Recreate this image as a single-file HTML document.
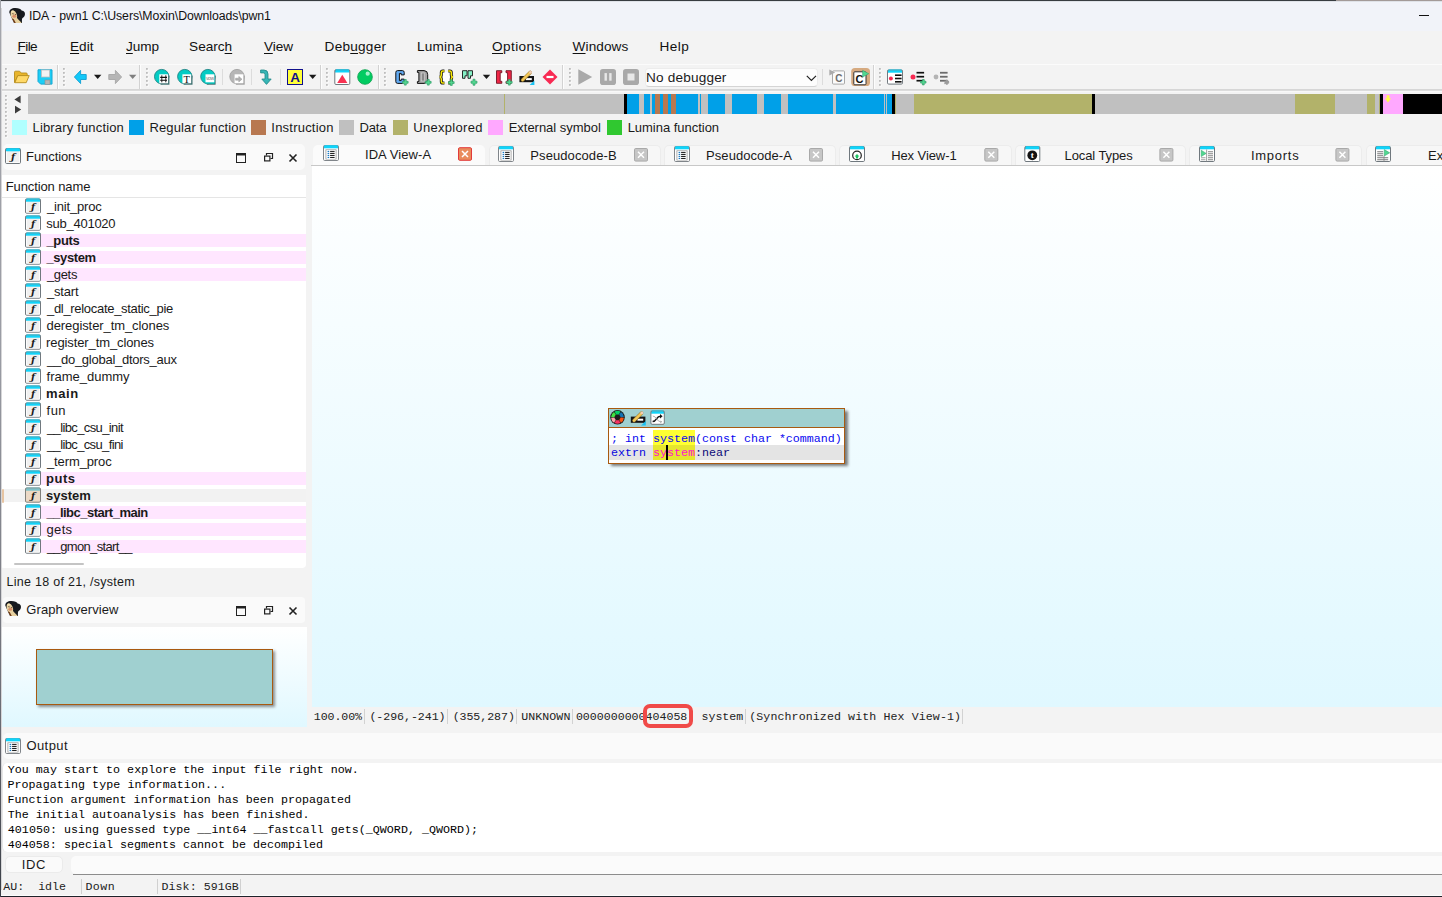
<!DOCTYPE html><html><head><meta charset="utf-8"><title>IDA - pwn1</title><style>
*{box-sizing:border-box;margin:0;padding:0}
html,body{width:1442px;height:897px;overflow:hidden;background:#f3f3f3}
body{position:relative;font-family:"Liberation Sans",sans-serif;font-size:12px;color:#1a1a1a}
.a{position:absolute}
.t{position:absolute;white-space:pre;line-height:16px;height:16px}
.ui{font-family:"Liberation Sans",sans-serif;font-size:12px}
.mono{font-family:"Liberation Mono",monospace}
u{text-decoration:underline;text-underline-offset:1.5px;text-decoration-thickness:1px}
svg{position:absolute;overflow:visible}
</style></head><body>
<div class="a" style="left:0px;top:0px;width:1336px;height:1px;background:#383c40;"></div>
<div class="a" style="left:1336px;top:0px;width:106px;height:1px;background:#a39a98;"></div>
<div class="a" style="left:1px;top:1px;width:1441px;height:1px;background:#dfe2e8;"></div>
<div class="a" style="left:1px;top:2px;width:1441px;height:29px;background:#f1f3f9;"></div>
<div class="a" style="left:1px;top:31px;width:1441px;height:33px;background:#f3f3f3;"></div>
<div id="t1" class="t" style="left:28.89px;top:8px;font-size:12.3px;color:#111;letter-spacing:-0.067px;">IDA - pwn1 C:\Users\Moxin\Downloads\pwn1</div>
<div class="a" style="left:1419px;top:15px;width:10px;height:1px;background:#111;"></div>
<div id="t2" class="t" style="left:17.62px;top:36.5px;font-size:13.6px;line-height:20px;height:20px;color:#111;letter-spacing:-0.646px;"><u>F</u>ile</div>
<div id="t3" class="t" style="left:70.0px;top:36.5px;font-size:13.6px;line-height:20px;height:20px;color:#111;letter-spacing:0.019px;"><u>E</u>dit</div>
<div id="t4" class="t" style="left:126.0px;top:36.5px;font-size:13.6px;line-height:20px;height:20px;color:#111;letter-spacing:-0.046px;"><u>J</u>ump</div>
<div id="t5" class="t" style="left:189.1px;top:36.5px;font-size:13.6px;line-height:20px;height:20px;color:#111;letter-spacing:0.000px;">Searc<u>h</u></div>
<div id="t6" class="t" style="left:264.0px;top:36.5px;font-size:13.6px;line-height:20px;height:20px;color:#111;letter-spacing:-0.059px;"><u>V</u>iew</div>
<div id="t7" class="t" style="left:324.61px;top:36.5px;font-size:13.6px;line-height:20px;height:20px;color:#111;letter-spacing:0.230px;">Deb<u>u</u>gger</div>
<div id="t8" class="t" style="left:417.1px;top:36.5px;font-size:13.6px;line-height:20px;height:20px;color:#111;letter-spacing:0.156px;">Lumi<u>n</u>a</div>
<div id="t9" class="t" style="left:492.0px;top:36.5px;font-size:13.6px;line-height:20px;height:20px;color:#111;letter-spacing:0.407px;"><u>O</u>ptions</div>
<div id="t10" class="t" style="left:572.62px;top:36.5px;font-size:13.6px;line-height:20px;height:20px;color:#111;letter-spacing:0.089px;"><u>W</u>indows</div>
<div id="t11" class="t" style="left:659.61px;top:36.5px;font-size:13.6px;line-height:20px;height:20px;color:#111;letter-spacing:0.380px;">Help</div>
<div class="a" style="left:1px;top:64px;width:1441px;height:1px;background:#fbfbfb;"></div>
<div class="a" style="left:1px;top:89px;width:1441px;height:1px;background:#d6d6d6;"></div>
<div class="a" style="left:1px;top:90px;width:1441px;height:1px;background:#dcdcdc;"></div>
<div class="a" style="left:1px;top:91px;width:1441px;height:1px;background:#f8f8f8;"></div>
<div class="a" style="left:645px;top:68px;width:173px;height:19px;background:#fdfdfd;border:1px solid #ececec;border-bottom-color:#d4d4d4;border-radius:4px"></div>
<div id="t12" class="t" style="left:646.1px;top:69.5px;font-size:13.6px;letter-spacing:0.169px;">No debugger</div>
<div class="a" style="left:28px;top:94px;width:476px;height:20px;background:#c0c0c0;"></div>
<div class="a" style="left:504px;top:94px;width:1px;height:20px;background:#b2b26a;"></div>
<div class="a" style="left:505px;top:94px;width:119px;height:20px;background:#c0c0c0;"></div>
<div class="a" style="left:624px;top:94px;width:3px;height:20px;background:#000;"></div>
<div class="a" style="left:627px;top:94px;width:12px;height:20px;background:#00a0e8;"></div>
<div class="a" style="left:639px;top:94px;width:5px;height:20px;background:#c0c0c0;"></div>
<div class="a" style="left:644px;top:94px;width:6px;height:20px;background:#00a0e8;"></div>
<div class="a" style="left:650px;top:94px;width:2px;height:20px;background:#c0c0c0;"></div>
<div class="a" style="left:652px;top:94px;width:3px;height:20px;background:#00a0e8;"></div>
<div class="a" style="left:655px;top:94px;width:5px;height:20px;background:#b87850;"></div>
<div class="a" style="left:660px;top:94px;width:3px;height:20px;background:#00a0e8;"></div>
<div class="a" style="left:663px;top:94px;width:5px;height:20px;background:#b87850;"></div>
<div class="a" style="left:668px;top:94px;width:3px;height:20px;background:#00a0e8;"></div>
<div class="a" style="left:671px;top:94px;width:5px;height:20px;background:#b87850;"></div>
<div class="a" style="left:676px;top:94px;width:22px;height:20px;background:#00a0e8;"></div>
<div class="a" style="left:698px;top:94px;width:2px;height:20px;background:#c0c0c0;"></div>
<div class="a" style="left:700px;top:94px;width:1px;height:20px;background:#00a0e8;"></div>
<div class="a" style="left:701px;top:94px;width:7px;height:20px;background:#c0c0c0;"></div>
<div class="a" style="left:708px;top:94px;width:17px;height:20px;background:#00a0e8;"></div>
<div class="a" style="left:725px;top:94px;width:7px;height:20px;background:#c0c0c0;"></div>
<div class="a" style="left:732px;top:94px;width:25px;height:20px;background:#00a0e8;"></div>
<div class="a" style="left:757px;top:94px;width:7px;height:20px;background:#c0c0c0;"></div>
<div class="a" style="left:764px;top:94px;width:17px;height:20px;background:#00a0e8;"></div>
<div class="a" style="left:781px;top:94px;width:7px;height:20px;background:#c0c0c0;"></div>
<div class="a" style="left:788px;top:94px;width:45px;height:20px;background:#00a0e8;"></div>
<div class="a" style="left:833px;top:94px;width:3px;height:20px;background:#c0c0c0;"></div>
<div class="a" style="left:836px;top:94px;width:48px;height:20px;background:#00a0e8;"></div>
<div class="a" style="left:884px;top:94px;width:1px;height:20px;background:#c0c0c0;"></div>
<div class="a" style="left:885px;top:94px;width:1px;height:20px;background:#00a0e8;"></div>
<div class="a" style="left:886px;top:94px;width:1px;height:20px;background:#c0c0c0;"></div>
<div class="a" style="left:887px;top:94px;width:5px;height:20px;background:#00a0e8;"></div>
<div class="a" style="left:892px;top:94px;width:3px;height:20px;background:#000;"></div>
<div class="a" style="left:895px;top:94px;width:1px;height:20px;background:#b2b26a;"></div>
<div class="a" style="left:896px;top:94px;width:18px;height:20px;background:#c0c0c0;"></div>
<div class="a" style="left:914px;top:94px;width:178px;height:20px;background:#b2b26a;"></div>
<div class="a" style="left:1092px;top:94px;width:3px;height:20px;background:#000;"></div>
<div class="a" style="left:1095px;top:94px;width:200px;height:20px;background:#c0c0c0;"></div>
<div class="a" style="left:1295px;top:94px;width:40px;height:20px;background:#b2b26a;"></div>
<div class="a" style="left:1335px;top:94px;width:32px;height:20px;background:#c0c0c0;"></div>
<div class="a" style="left:1367px;top:94px;width:8px;height:20px;background:#b2b26a;"></div>
<div class="a" style="left:1375px;top:94px;width:4px;height:20px;background:#c0c0c0;"></div>
<div class="a" style="left:1379px;top:94px;width:1px;height:20px;background:#b2b26a;"></div>
<div class="a" style="left:1380px;top:94px;width:3px;height:20px;background:#000;"></div>
<div class="a" style="left:1383px;top:94px;width:20px;height:20px;background:#ffa8ff;"></div>
<div class="a" style="left:1403px;top:94px;width:39px;height:20px;background:#000;"></div>
<div class="a" style="left:12px;top:120px;width:15px;height:15px;background:#b0ffff;"></div>
<div id="t13" class="t" style="left:32.49px;top:120px;font-size:13px;letter-spacing:0.165px;">Library function</div>
<div class="a" style="left:129px;top:120px;width:15px;height:15px;background:#00a0e8;"></div>
<div id="t14" class="t" style="left:149.49px;top:120px;font-size:13px;letter-spacing:0.116px;">Regular function</div>
<div class="a" style="left:251px;top:120px;width:15px;height:15px;background:#b87850;"></div>
<div id="t15" class="t" style="left:271.31px;top:120px;font-size:13px;letter-spacing:0.222px;">Instruction</div>
<div class="a" style="left:339px;top:120px;width:15px;height:15px;background:#c0c0c0;"></div>
<div id="t16" class="t" style="left:359.49px;top:120px;font-size:13px;letter-spacing:-0.160px;">Data</div>
<div class="a" style="left:393px;top:120px;width:15px;height:15px;background:#b2b26a;"></div>
<div id="t17" class="t" style="left:413.37px;top:120px;font-size:13px;letter-spacing:0.282px;">Unexplored</div>
<div class="a" style="left:488px;top:120px;width:15px;height:15px;background:#ffa8ff;"></div>
<div id="t18" class="t" style="left:508.66px;top:120px;font-size:13px;letter-spacing:-0.020px;">External symbol</div>
<div class="a" style="left:607px;top:120px;width:15px;height:15px;background:#30c830;"></div>
<div id="t19" class="t" style="left:627.66px;top:120px;font-size:13px;letter-spacing:-0.026px;">Lumina function</div>
<div class="a" style="left:3px;top:144px;width:302px;height:26px;background:#fafafa;border-radius:5px"></div>
<div id="t20" class="t" style="left:26.1px;top:149px;font-size:13px;letter-spacing:-0.090px;">Functions</div>
<div class="a" style="left:0px;top:175px;width:306px;height:393px;background:#fff;border-radius:0 0 4px 4px"></div>
<div id="t21" class="t" style="left:5.67px;top:179px;font-size:13px;letter-spacing:-0.100px;">Function name</div>
<div class="a" style="left:0px;top:197px;width:306px;height:1px;background:#e5e5e5;"></div>
<div id="t22" class="t" style="left:47.0px;top:199px;font-size:13px;;letter-spacing:-0.181px;">_init_proc</div>
<div id="t23" class="t" style="left:46.36px;top:216px;font-size:13px;;letter-spacing:-0.263px;">sub_401020</div>
<div class="a" style="left:41px;top:234px;width:265px;height:13px;background:#ffe6ff;"></div>
<div id="t24" class="t" style="left:46.44px;top:233px;font-size:13px;font-weight:bold;;letter-spacing:-0.332px;">_puts</div>
<div class="a" style="left:41px;top:251px;width:265px;height:13px;background:#ffe6ff;"></div>
<div id="t25" class="t" style="left:46.44px;top:250px;font-size:13px;font-weight:bold;;letter-spacing:-0.406px;">_system</div>
<div class="a" style="left:41px;top:268px;width:265px;height:13px;background:#ffe6ff;"></div>
<div id="t26" class="t" style="left:46.99px;top:267px;font-size:13px;;letter-spacing:-0.351px;">_gets</div>
<div id="t27" class="t" style="left:47.0px;top:284px;font-size:13px;;letter-spacing:-0.203px;">_start</div>
<div id="t28" class="t" style="left:47.0px;top:301px;font-size:13px;;letter-spacing:-0.308px;">_dl_relocate_static_pie</div>
<div id="t29" class="t" style="left:46.56px;top:318px;font-size:13px;;letter-spacing:-0.082px;">deregister_tm_clones</div>
<div id="t30" class="t" style="left:46.1px;top:335px;font-size:13px;;letter-spacing:-0.108px;">register_tm_clones</div>
<div id="t31" class="t" style="left:47.0px;top:352px;font-size:13px;;letter-spacing:-0.257px;">__do_global_dtors_aux</div>
<div id="t32" class="t" style="left:46.56px;top:369px;font-size:13px;;letter-spacing:-0.008px;">frame_dummy</div>
<div id="t33" class="t" style="left:46.1px;top:386px;font-size:13px;font-weight:bold;;letter-spacing:0.587px;">main</div>
<div id="t34" class="t" style="left:46.58px;top:403px;font-size:13px;;letter-spacing:0.469px;">fun</div>
<div id="t35" class="t" style="left:47.0px;top:420px;font-size:13px;;letter-spacing:-0.621px;">__libc_csu_init</div>
<div id="t36" class="t" style="left:47.0px;top:437px;font-size:13px;;letter-spacing:-0.635px;">__libc_csu_fini</div>
<div id="t37" class="t" style="left:47.0px;top:454px;font-size:13px;;letter-spacing:-0.117px;">_term_proc</div>
<div class="a" style="left:41px;top:472px;width:265px;height:13px;background:#ffe6ff;"></div>
<div id="t38" class="t" style="left:46.1px;top:471px;font-size:13px;font-weight:bold;;letter-spacing:0.483px;">puts</div>
<div class="a" style="left:4px;top:489.3px;width:302px;height:12.5px;background:#f2f2f2;"></div>
<div class="a" style="left:2px;top:488.5px;width:1.8px;height:14px;background:#e6c4a2;border-radius:1px"></div>
<div id="t39" class="t" style="left:46.1px;top:488px;font-size:13px;font-weight:bold;;letter-spacing:-0.029px;">system</div>
<div class="a" style="left:41px;top:506px;width:265px;height:13px;background:#ffe6ff;"></div>
<div id="t40" class="t" style="left:46.44px;top:505px;font-size:13px;font-weight:bold;;letter-spacing:-0.501px;">__libc_start_main</div>
<div class="a" style="left:41px;top:523px;width:265px;height:13px;background:#ffe6ff;"></div>
<div id="t41" class="t" style="left:46.55px;top:522px;font-size:13px;;letter-spacing:0.331px;">gets</div>
<div class="a" style="left:41px;top:540px;width:265px;height:13px;background:#ffe6ff;"></div>
<div id="t42" class="t" style="left:46.99px;top:539px;font-size:13px;;letter-spacing:-0.650px;">__gmon_start__</div>
<div class="a" style="left:14px;top:563px;width:70px;height:2px;background:#c4c4c4;border-radius:1px"></div>
<div id="t43" class="t" style="left:6.56px;top:574px;font-size:12.5px;letter-spacing:0.279px;">Line 18 of 21, /system</div>
<div class="a" style="left:3px;top:597px;width:302px;height:26px;background:#fafafa;border-radius:4px"></div>
<div id="t44" class="t" style="left:26.35px;top:602px;font-size:13px;letter-spacing:0.082px;">Graph overview</div>
<div class="a" style="left:2px;top:627px;width:305px;height:100px;background:linear-gradient(#ffffff,#e0f8ff);"></div>
<div class="a" style="left:38px;top:651px;width:237px;height:56px;background:#606060;filter:blur(1.5px);opacity:.7"></div>
<div class="a" style="left:36px;top:649px;width:237px;height:56px;background:#a0d0d0;border:1px solid #a85a10"></div>
<svg style="left:236px;top:153px" width="10" height="10" viewBox="0 0 10 10"><rect x="0.5" y="0.5" width="9" height="9" fill="none" stroke="#222"/><rect x="0" y="0" width="10" height="2.5" fill="#222"/></svg>
<svg style="left:264px;top:153px" width="9" height="9" viewBox="0 0 9 9"><path d="M2.5 2.5V0.5H8.5V5.5H6.5" fill="none" stroke="#222" stroke-width="1.2"/><rect x="0.6" y="3.1" width="5.3" height="4.8" fill="none" stroke="#222" stroke-width="1.2"/></svg>
<svg style="left:289px;top:154px" width="8" height="8" viewBox="0 0 8 8"><path d="M0.5 0.5L7.5 7.5M7.5 0.5L0.5 7.5" stroke="#222" stroke-width="1.6"/></svg>
<svg style="left:236px;top:606px" width="10" height="10" viewBox="0 0 10 10"><rect x="0.5" y="0.5" width="9" height="9" fill="none" stroke="#222"/><rect x="0" y="0" width="10" height="2.5" fill="#222"/></svg>
<svg style="left:264px;top:606px" width="9" height="9" viewBox="0 0 9 9"><path d="M2.5 2.5V0.5H8.5V5.5H6.5" fill="none" stroke="#222" stroke-width="1.2"/><rect x="0.6" y="3.1" width="5.3" height="4.8" fill="none" stroke="#222" stroke-width="1.2"/></svg>
<svg style="left:289px;top:607px" width="8" height="8" viewBox="0 0 8 8"><path d="M0.5 0.5L7.5 7.5M7.5 0.5L0.5 7.5" stroke="#222" stroke-width="1.6"/></svg>
<div class="a" style="left:311px;top:165px;width:1131px;height:1px;background:#c8c8c8;"></div>
<div class="a" style="left:312px;top:166px;width:1130px;height:541px;background:linear-gradient(#ffffff,#e0f8ff);"></div>
<div class="a" style="left:313.4px;top:144.7px;width:171.6px;height:20.3px;background:#fbfbfb;border-radius:5px 5px 0 0;"></div>
<div id="t45" class="t" style="left:364.97px;top:146.5px;font-size:13px;letter-spacing:0.068px;">IDA View-A</div>
<div class="a" style="left:488.6px;top:144.7px;width:172.8px;height:20.3px;background:#f7f7f7;border-radius:5px 5px 0 0;border:1px solid #ececec;border-bottom:none"></div>
<div id="t46" class="t" style="left:530.33px;top:147.7px;font-size:13px;letter-spacing:0.087px;">Pseudocode-B</div>
<div class="a" style="left:664.2px;top:144.7px;width:172px;height:20.3px;background:#f7f7f7;border-radius:5px 5px 0 0;border:1px solid #ececec;border-bottom:none"></div>
<div id="t47" class="t" style="left:706.1px;top:147.7px;font-size:13px;letter-spacing:0.046px;">Pseudocode-A</div>
<div class="a" style="left:839.3px;top:144.7px;width:172.3px;height:20.3px;background:#f7f7f7;border-radius:5px 5px 0 0;border:1px solid #ececec;border-bottom:none"></div>
<div id="t48" class="t" style="left:891.15px;top:147.7px;font-size:13px;letter-spacing:-0.084px;">Hex View-1</div>
<div class="a" style="left:1015.2px;top:144.7px;width:170.5px;height:20.3px;background:#f7f7f7;border-radius:5px 5px 0 0;border:1px solid #ececec;border-bottom:none"></div>
<div id="t49" class="t" style="left:1064.5px;top:147.7px;font-size:13px;letter-spacing:-0.091px;">Local Types</div>
<div class="a" style="left:1189.2px;top:144.7px;width:173.1px;height:20.3px;background:#f7f7f7;border-radius:5px 5px 0 0;border:1px solid #ececec;border-bottom:none"></div>
<div id="t50" class="t" style="left:1250.98px;top:147.7px;font-size:13px;letter-spacing:0.731px;">Imports</div>
<div class="a" style="left:1365.5px;top:144.7px;width:80px;height:20.3px;background:#f7f7f7;border-radius:5px 5px 0 0;border:1px solid #ececec;border-bottom:none"></div>
<div id="t51" class="t" style="left:1428px;top:147.7px;font-size:13px;">Ex</div>
<div class="a" style="left:312px;top:707px;width:1130px;height:20px;background:#f3f3f3;"></div>
<div id="t52" class="t mono" style="left:313.84px;top:708.8px;font-size:11.6px;color:#222;letter-spacing:-0.088px;">100.00%</div>
<div id="t53" class="t mono" style="left:369.45px;top:708.8px;font-size:11.6px;color:#222;letter-spacing:-0.045px;">(-296,-241)</div>
<div id="t54" class="t mono" style="left:452.63px;top:708.8px;font-size:11.6px;color:#222;letter-spacing:-0.045px;">(355,287)</div>
<div id="t55" class="t mono" style="left:521.17px;top:708.8px;font-size:11.6px;color:#222;letter-spacing:0.084px;">UNKNOWN</div>
<div id="t56" class="t mono" style="left:575.9px;top:708.8px;font-size:11.6px;color:#222;letter-spacing:0.007px;">0000000000404058</div>
<div id="t57" class="t mono" style="left:701.5px;top:708.8px;font-size:11.6px;color:#222;letter-spacing:-0.016px;">system</div>
<div id="t58" class="t mono" style="left:749.26px;top:708.8px;font-size:11.6px;color:#222;letter-spacing:0.103px;">(Synchronized with Hex View-1)</div>
<div class="a" style="left:364.2px;top:709px;width:1px;height:14.5px;background:#d2d2d2;"></div>
<div class="a" style="left:447.2px;top:709px;width:1px;height:14.5px;background:#d2d2d2;"></div>
<div class="a" style="left:516.3px;top:709px;width:1px;height:14.5px;background:#d2d2d2;"></div>
<div class="a" style="left:572.3px;top:709px;width:1px;height:14.5px;background:#d2d2d2;"></div>
<div class="a" style="left:745.1px;top:709px;width:1px;height:14.5px;background:#d2d2d2;"></div>
<div class="a" style="left:962.1px;top:709px;width:1px;height:14.5px;background:#d2d2d2;"></div>
<div class="a" style="left:643px;top:703.8px;width:50px;height:24.2px;background:transparent;border:4px solid #f04a48;border-radius:7px"></div>
<div class="a" style="left:611px;top:411px;width:237px;height:55px;background:#505050;filter:blur(1.5px);opacity:.75"></div>
<div class="a" style="left:608px;top:408px;width:237px;height:56px;background:#fff;border:1px solid #a85a10"></div>
<div class="a" style="left:609px;top:409px;width:235px;height:18px;background:#a0d0d0;"></div>
<div class="a" style="left:609px;top:427px;width:235px;height:1px;background:#a85a10;"></div>
<div class="a" style="left:609px;top:445px;width:235px;height:15px;background:#e4e4e4;"></div>
<div class="a" style="left:653px;top:430px;width:42px;height:15px;background:#ffff32;"></div>
<div class="a" style="left:653px;top:445px;width:42px;height:15px;background:#e6e62e;"></div>
<div id="t59" class="t mono" style="left:611px;top:430.5px;font-size:11.67px;color:#0808f0;">; int system(const char *command)</div>
<div id="t60" class="t mono" style="left:611px;top:445.4px;font-size:11.67px;"><span style="color:#0808e0">extrn </span><span style="color:#ff10d0">system</span><span style="color:#0a0a78">:near</span></div>
<div class="a" style="left:666px;top:445px;width:2.2px;height:15px;background:#000;"></div>
<div class="a" style="left:3px;top:733px;width:1442px;height:26px;background:#fafafa;border-radius:5px 0 0 5px"></div>
<div id="t61" class="t" style="left:26.41px;top:738px;font-size:13px;letter-spacing:0.430px;">Output</div>
<div class="a" style="left:2px;top:763px;width:1442px;height:89px;background:#fff;border-radius:5px 0 0 5px;border-left:1px solid #e6e6e6"></div>
<div id="t62" class="t mono" style="left:7.75px;top:761.6px;font-size:11.67px;color:#000;letter-spacing:0.027px;">You may start to explore the input file right now.</div>
<div id="t63" class="t mono" style="left:7.38px;top:776.6px;font-size:11.67px;color:#000;letter-spacing:0.064px;">Propagating type information...</div>
<div id="t64" class="t mono" style="left:7.39px;top:791.6px;font-size:11.67px;color:#000;letter-spacing:0.019px;">Function argument information has been propagated</div>
<div id="t65" class="t mono" style="left:7.72px;top:806.6px;font-size:11.67px;color:#000;letter-spacing:0.023px;">The initial autoanalysis has been finished.</div>
<div id="t66" class="t mono" style="left:7.83px;top:821.6px;font-size:11.67px;color:#000;letter-spacing:0.024px;">401050: using guessed type __int64 __fastcall gets(_QWORD, _QWORD);</div>
<div id="t67" class="t mono" style="left:7.83px;top:836.6px;font-size:11.67px;color:#000;letter-spacing:0.011px;">404058: special segments cannot be decompiled</div>
<div class="a" style="left:5px;top:855.7px;width:58px;height:17.8px;background:#fafafa;border:1px solid #ebebeb;border-radius:5px"></div>
<div id="t68" class="t" style="left:21.85px;top:857px;font-size:13px;letter-spacing:0.522px;">IDC</div>
<div class="a" style="left:71px;top:856px;width:1371px;height:18px;background:#fbfbfb;border-radius:5px 0 0 5px"></div>
<div class="a" style="left:73px;top:873.5px;width:1369px;height:1px;background:#8c8c8c;"></div>
<div class="a" style="left:0px;top:875px;width:1442px;height:20px;background:#f3f3f3;"></div>
<div class="a" style="left:0px;top:895px;width:1442px;height:1px;background:#fdfdfd;"></div>
<div id="t69" class="t mono" style="left:3.29px;top:878.6px;font-size:11.6px;color:#222;letter-spacing:0.015px;">AU:  idle</div>
<div id="t70" class="t mono" style="left:85.41px;top:878.6px;font-size:11.6px;color:#222;letter-spacing:0.484px;">Down</div>
<div id="t71" class="t mono" style="left:161.51px;top:878.6px;font-size:11.6px;color:#222;letter-spacing:0.078px;">Disk: 591GB</div>
<div class="a" style="left:81px;top:879px;width:1px;height:14.5px;background:#d0d0d0;"></div>
<div class="a" style="left:157px;top:879px;width:1px;height:14.5px;background:#d0d0d0;"></div>
<div class="a" style="left:240px;top:879px;width:1px;height:14.5px;background:#d0d0d0;"></div>
<div class="a" style="left:0px;top:896px;width:1442px;height:1px;background:#1e222a;"></div>
<div class="a" style="left:0px;top:0px;width:1px;height:897px;background:linear-gradient(#a4a6ac,#9a9ca4 40%,#6a6c74 80%,#3a3e46);"></div>
<div class="a" style="left:1px;top:8px;width:1px;height:882px;background:#d6d6d8;"></div>
<svg style="left:0;top:0" width="1442" height="897" viewBox="0 0 1442 897"><rect x="25.5" y="198.9" width="15" height="14.3" rx="1.2" fill="#f0f0f0"/><rect x="25.7" y="199.1" width="14.6" height="2.6" fill="#10d4fa"/><rect x="25.5" y="198.9" width="15" height="14.3" rx="1.2" fill="none" stroke="#70787e"/><path d="M26.6 198.9H39.4" stroke="#10d4fa" stroke-opacity=".8" fill="none"/><path d="M26.5 202.0V212.20000000000002H39.5V202.0" stroke="#fff" stroke-opacity=".8" fill="none"/><text x="33.1" y="210.20" text-anchor="middle" font-family="DejaVu Serif,serif" font-style="italic" font-weight="bold" font-size="9.6" fill="#1a1a1a">ƒ</text><rect x="25.5" y="215.9" width="15" height="14.3" rx="1.2" fill="#f0f0f0"/><rect x="25.7" y="216.1" width="14.6" height="2.6" fill="#10d4fa"/><rect x="25.5" y="215.9" width="15" height="14.3" rx="1.2" fill="none" stroke="#70787e"/><path d="M26.6 215.9H39.4" stroke="#10d4fa" stroke-opacity=".8" fill="none"/><path d="M26.5 219.0V229.20000000000002H39.5V219.0" stroke="#fff" stroke-opacity=".8" fill="none"/><text x="33.1" y="227.20" text-anchor="middle" font-family="DejaVu Serif,serif" font-style="italic" font-weight="bold" font-size="9.6" fill="#1a1a1a">ƒ</text><rect x="25.5" y="232.9" width="15" height="14.3" rx="1.2" fill="#f0f0f0"/><rect x="25.7" y="233.1" width="14.6" height="2.6" fill="#10d4fa"/><rect x="25.5" y="232.9" width="15" height="14.3" rx="1.2" fill="none" stroke="#70787e"/><path d="M26.6 232.9H39.4" stroke="#10d4fa" stroke-opacity=".8" fill="none"/><path d="M26.5 236.0V246.20000000000002H39.5V236.0" stroke="#fff" stroke-opacity=".8" fill="none"/><text x="33.1" y="244.20" text-anchor="middle" font-family="DejaVu Serif,serif" font-style="italic" font-weight="bold" font-size="9.6" fill="#1a1a1a">ƒ</text><rect x="25.5" y="249.9" width="15" height="14.3" rx="1.2" fill="#f0f0f0"/><rect x="25.7" y="250.1" width="14.6" height="2.6" fill="#10d4fa"/><rect x="25.5" y="249.9" width="15" height="14.3" rx="1.2" fill="none" stroke="#70787e"/><path d="M26.6 249.9H39.4" stroke="#10d4fa" stroke-opacity=".8" fill="none"/><path d="M26.5 253.0V263.2H39.5V253.0" stroke="#fff" stroke-opacity=".8" fill="none"/><text x="33.1" y="261.20" text-anchor="middle" font-family="DejaVu Serif,serif" font-style="italic" font-weight="bold" font-size="9.6" fill="#1a1a1a">ƒ</text><rect x="25.5" y="266.9" width="15" height="14.3" rx="1.2" fill="#f0f0f0"/><rect x="25.7" y="267.09999999999997" width="14.6" height="2.6" fill="#10d4fa"/><rect x="25.5" y="266.9" width="15" height="14.3" rx="1.2" fill="none" stroke="#70787e"/><path d="M26.6 266.9H39.4" stroke="#10d4fa" stroke-opacity=".8" fill="none"/><path d="M26.5 270.0V280.2H39.5V270.0" stroke="#fff" stroke-opacity=".8" fill="none"/><text x="33.1" y="278.20" text-anchor="middle" font-family="DejaVu Serif,serif" font-style="italic" font-weight="bold" font-size="9.6" fill="#1a1a1a">ƒ</text><rect x="25.5" y="283.9" width="15" height="14.3" rx="1.2" fill="#f0f0f0"/><rect x="25.7" y="284.09999999999997" width="14.6" height="2.6" fill="#10d4fa"/><rect x="25.5" y="283.9" width="15" height="14.3" rx="1.2" fill="none" stroke="#70787e"/><path d="M26.6 283.9H39.4" stroke="#10d4fa" stroke-opacity=".8" fill="none"/><path d="M26.5 287.0V297.2H39.5V287.0" stroke="#fff" stroke-opacity=".8" fill="none"/><text x="33.1" y="295.20" text-anchor="middle" font-family="DejaVu Serif,serif" font-style="italic" font-weight="bold" font-size="9.6" fill="#1a1a1a">ƒ</text><rect x="25.5" y="300.9" width="15" height="14.3" rx="1.2" fill="#f0f0f0"/><rect x="25.7" y="301.09999999999997" width="14.6" height="2.6" fill="#10d4fa"/><rect x="25.5" y="300.9" width="15" height="14.3" rx="1.2" fill="none" stroke="#70787e"/><path d="M26.6 300.9H39.4" stroke="#10d4fa" stroke-opacity=".8" fill="none"/><path d="M26.5 304.0V314.2H39.5V304.0" stroke="#fff" stroke-opacity=".8" fill="none"/><text x="33.1" y="312.20" text-anchor="middle" font-family="DejaVu Serif,serif" font-style="italic" font-weight="bold" font-size="9.6" fill="#1a1a1a">ƒ</text><rect x="25.5" y="317.9" width="15" height="14.3" rx="1.2" fill="#f0f0f0"/><rect x="25.7" y="318.09999999999997" width="14.6" height="2.6" fill="#10d4fa"/><rect x="25.5" y="317.9" width="15" height="14.3" rx="1.2" fill="none" stroke="#70787e"/><path d="M26.6 317.9H39.4" stroke="#10d4fa" stroke-opacity=".8" fill="none"/><path d="M26.5 321.0V331.2H39.5V321.0" stroke="#fff" stroke-opacity=".8" fill="none"/><text x="33.1" y="329.20" text-anchor="middle" font-family="DejaVu Serif,serif" font-style="italic" font-weight="bold" font-size="9.6" fill="#1a1a1a">ƒ</text><rect x="25.5" y="334.9" width="15" height="14.3" rx="1.2" fill="#f0f0f0"/><rect x="25.7" y="335.09999999999997" width="14.6" height="2.6" fill="#10d4fa"/><rect x="25.5" y="334.9" width="15" height="14.3" rx="1.2" fill="none" stroke="#70787e"/><path d="M26.6 334.9H39.4" stroke="#10d4fa" stroke-opacity=".8" fill="none"/><path d="M26.5 338.0V348.2H39.5V338.0" stroke="#fff" stroke-opacity=".8" fill="none"/><text x="33.1" y="346.20" text-anchor="middle" font-family="DejaVu Serif,serif" font-style="italic" font-weight="bold" font-size="9.6" fill="#1a1a1a">ƒ</text><rect x="25.5" y="351.9" width="15" height="14.3" rx="1.2" fill="#f0f0f0"/><rect x="25.7" y="352.09999999999997" width="14.6" height="2.6" fill="#10d4fa"/><rect x="25.5" y="351.9" width="15" height="14.3" rx="1.2" fill="none" stroke="#70787e"/><path d="M26.6 351.9H39.4" stroke="#10d4fa" stroke-opacity=".8" fill="none"/><path d="M26.5 355.0V365.2H39.5V355.0" stroke="#fff" stroke-opacity=".8" fill="none"/><text x="33.1" y="363.20" text-anchor="middle" font-family="DejaVu Serif,serif" font-style="italic" font-weight="bold" font-size="9.6" fill="#1a1a1a">ƒ</text><rect x="25.5" y="368.9" width="15" height="14.3" rx="1.2" fill="#f0f0f0"/><rect x="25.7" y="369.09999999999997" width="14.6" height="2.6" fill="#10d4fa"/><rect x="25.5" y="368.9" width="15" height="14.3" rx="1.2" fill="none" stroke="#70787e"/><path d="M26.6 368.9H39.4" stroke="#10d4fa" stroke-opacity=".8" fill="none"/><path d="M26.5 372.0V382.2H39.5V372.0" stroke="#fff" stroke-opacity=".8" fill="none"/><text x="33.1" y="380.20" text-anchor="middle" font-family="DejaVu Serif,serif" font-style="italic" font-weight="bold" font-size="9.6" fill="#1a1a1a">ƒ</text><rect x="25.5" y="385.9" width="15" height="14.3" rx="1.2" fill="#f0f0f0"/><rect x="25.7" y="386.09999999999997" width="14.6" height="2.6" fill="#10d4fa"/><rect x="25.5" y="385.9" width="15" height="14.3" rx="1.2" fill="none" stroke="#70787e"/><path d="M26.6 385.9H39.4" stroke="#10d4fa" stroke-opacity=".8" fill="none"/><path d="M26.5 389.0V399.2H39.5V389.0" stroke="#fff" stroke-opacity=".8" fill="none"/><text x="33.1" y="397.20" text-anchor="middle" font-family="DejaVu Serif,serif" font-style="italic" font-weight="bold" font-size="9.6" fill="#1a1a1a">ƒ</text><rect x="25.5" y="402.9" width="15" height="14.3" rx="1.2" fill="#f0f0f0"/><rect x="25.7" y="403.09999999999997" width="14.6" height="2.6" fill="#10d4fa"/><rect x="25.5" y="402.9" width="15" height="14.3" rx="1.2" fill="none" stroke="#70787e"/><path d="M26.6 402.9H39.4" stroke="#10d4fa" stroke-opacity=".8" fill="none"/><path d="M26.5 406.0V416.2H39.5V406.0" stroke="#fff" stroke-opacity=".8" fill="none"/><text x="33.1" y="414.20" text-anchor="middle" font-family="DejaVu Serif,serif" font-style="italic" font-weight="bold" font-size="9.6" fill="#1a1a1a">ƒ</text><rect x="25.5" y="419.9" width="15" height="14.3" rx="1.2" fill="#f0f0f0"/><rect x="25.7" y="420.09999999999997" width="14.6" height="2.6" fill="#10d4fa"/><rect x="25.5" y="419.9" width="15" height="14.3" rx="1.2" fill="none" stroke="#70787e"/><path d="M26.6 419.9H39.4" stroke="#10d4fa" stroke-opacity=".8" fill="none"/><path d="M26.5 423.0V433.2H39.5V423.0" stroke="#fff" stroke-opacity=".8" fill="none"/><text x="33.1" y="431.20" text-anchor="middle" font-family="DejaVu Serif,serif" font-style="italic" font-weight="bold" font-size="9.6" fill="#1a1a1a">ƒ</text><rect x="25.5" y="436.9" width="15" height="14.3" rx="1.2" fill="#f0f0f0"/><rect x="25.7" y="437.09999999999997" width="14.6" height="2.6" fill="#10d4fa"/><rect x="25.5" y="436.9" width="15" height="14.3" rx="1.2" fill="none" stroke="#70787e"/><path d="M26.6 436.9H39.4" stroke="#10d4fa" stroke-opacity=".8" fill="none"/><path d="M26.5 440.0V450.2H39.5V440.0" stroke="#fff" stroke-opacity=".8" fill="none"/><text x="33.1" y="448.20" text-anchor="middle" font-family="DejaVu Serif,serif" font-style="italic" font-weight="bold" font-size="9.6" fill="#1a1a1a">ƒ</text><rect x="25.5" y="453.9" width="15" height="14.3" rx="1.2" fill="#f0f0f0"/><rect x="25.7" y="454.09999999999997" width="14.6" height="2.6" fill="#10d4fa"/><rect x="25.5" y="453.9" width="15" height="14.3" rx="1.2" fill="none" stroke="#70787e"/><path d="M26.6 453.9H39.4" stroke="#10d4fa" stroke-opacity=".8" fill="none"/><path d="M26.5 457.0V467.2H39.5V457.0" stroke="#fff" stroke-opacity=".8" fill="none"/><text x="33.1" y="465.20" text-anchor="middle" font-family="DejaVu Serif,serif" font-style="italic" font-weight="bold" font-size="9.6" fill="#1a1a1a">ƒ</text><rect x="25.5" y="470.9" width="15" height="14.3" rx="1.2" fill="#f0f0f0"/><rect x="25.7" y="471.09999999999997" width="14.6" height="2.6" fill="#10d4fa"/><rect x="25.5" y="470.9" width="15" height="14.3" rx="1.2" fill="none" stroke="#70787e"/><path d="M26.6 470.9H39.4" stroke="#10d4fa" stroke-opacity=".8" fill="none"/><path d="M26.5 474.0V484.2H39.5V474.0" stroke="#fff" stroke-opacity=".8" fill="none"/><text x="33.1" y="482.20" text-anchor="middle" font-family="DejaVu Serif,serif" font-style="italic" font-weight="bold" font-size="9.6" fill="#1a1a1a">ƒ</text><rect x="25.5" y="487.9" width="15" height="14.3" rx="1.2" fill="#ecd9c6"/><rect x="25.7" y="488.09999999999997" width="14.6" height="2.6" fill="#7cc0c8"/><rect x="25.5" y="487.9" width="15" height="14.3" rx="1.2" fill="none" stroke="#80807a"/><path d="M26.6 487.9H39.4" stroke="#7cc0c8" stroke-opacity=".8" fill="none"/><text x="33.1" y="499.20" text-anchor="middle" font-family="DejaVu Serif,serif" font-style="italic" font-weight="bold" font-size="9.6" fill="#1a1a1a">ƒ</text><rect x="25.5" y="504.9" width="15" height="14.3" rx="1.2" fill="#f0f0f0"/><rect x="25.7" y="505.09999999999997" width="14.6" height="2.6" fill="#10d4fa"/><rect x="25.5" y="504.9" width="15" height="14.3" rx="1.2" fill="none" stroke="#70787e"/><path d="M26.6 504.9H39.4" stroke="#10d4fa" stroke-opacity=".8" fill="none"/><path d="M26.5 508.0V518.1999999999999H39.5V508.0" stroke="#fff" stroke-opacity=".8" fill="none"/><text x="33.1" y="516.20" text-anchor="middle" font-family="DejaVu Serif,serif" font-style="italic" font-weight="bold" font-size="9.6" fill="#1a1a1a">ƒ</text><rect x="25.5" y="521.9" width="15" height="14.3" rx="1.2" fill="#f0f0f0"/><rect x="25.7" y="522.1" width="14.6" height="2.6" fill="#10d4fa"/><rect x="25.5" y="521.9" width="15" height="14.3" rx="1.2" fill="none" stroke="#70787e"/><path d="M26.6 521.9H39.4" stroke="#10d4fa" stroke-opacity=".8" fill="none"/><path d="M26.5 525.0V535.1999999999999H39.5V525.0" stroke="#fff" stroke-opacity=".8" fill="none"/><text x="33.1" y="533.20" text-anchor="middle" font-family="DejaVu Serif,serif" font-style="italic" font-weight="bold" font-size="9.6" fill="#1a1a1a">ƒ</text><rect x="25.5" y="538.9" width="15" height="14.3" rx="1.2" fill="#f0f0f0"/><rect x="25.7" y="539.1" width="14.6" height="2.6" fill="#10d4fa"/><rect x="25.5" y="538.9" width="15" height="14.3" rx="1.2" fill="none" stroke="#70787e"/><path d="M26.6 538.9H39.4" stroke="#10d4fa" stroke-opacity=".8" fill="none"/><path d="M26.5 542.0V552.1999999999999H39.5V542.0" stroke="#fff" stroke-opacity=".8" fill="none"/><text x="33.1" y="550.20" text-anchor="middle" font-family="DejaVu Serif,serif" font-style="italic" font-weight="bold" font-size="9.6" fill="#1a1a1a">ƒ</text><g transform="translate(9,8)"><path d="M0.3 4.6C0.3 1.6 2.8 0 6.4 0.1C9.8 0.2 11.8 1.3 12.9 2.7C15.2 2.4 16.6 5 15.7 7.6C15.2 9.1 14 9.9 13.3 10.3C12.7 11.6 13 13.6 13 15.1L5 15.1L2 8.5Z" fill="#16191e"/><path d="M1.9 3.4C3.2 1.9 5.4 2.3 6.5 3.9C7.9 5.9 8.5 8 8 10C9 11.4 11 13 12.7 15.1L5.3 15.1C4.6 13.1 4.1 12.1 3.1 10.6C1.8 8.6 1.1 5.6 1.9 3.4Z" fill="#e7d09f"/><path d="M2.6 2.8C3.6 2.2 4.8 2.6 5.4 3.6C4.4 4.4 3.2 4.6 2.2 4.4Z" fill="#f3e3b4"/><ellipse cx="5.3" cy="8.3" rx="1.9" ry="1.5" fill="#d8845f" opacity=".85"/><path d="M2.9 10.3L5.3 15.1L6.8 15.1L4.8 11.2Z" fill="#6a3412"/><path d="M3.2 5.6l1.6 .4M5.8 6.3l1.4 .5" stroke="#5a4030" stroke-width=".8"/></g><g transform="translate(5,601)"><path d="M0.3 4.6C0.3 1.6 2.8 0 6.4 0.1C9.8 0.2 11.8 1.3 12.9 2.7C15.2 2.4 16.6 5 15.7 7.6C15.2 9.1 14 9.9 13.3 10.3C12.7 11.6 13 13.6 13 15.1L5 15.1L2 8.5Z" fill="#16191e"/><path d="M1.9 3.4C3.2 1.9 5.4 2.3 6.5 3.9C7.9 5.9 8.5 8 8 10C9 11.4 11 13 12.7 15.1L5.3 15.1C4.6 13.1 4.1 12.1 3.1 10.6C1.8 8.6 1.1 5.6 1.9 3.4Z" fill="#e7d09f"/><path d="M2.6 2.8C3.6 2.2 4.8 2.6 5.4 3.6C4.4 4.4 3.2 4.6 2.2 4.4Z" fill="#f3e3b4"/><ellipse cx="5.3" cy="8.3" rx="1.9" ry="1.5" fill="#d8845f" opacity=".85"/><path d="M2.9 10.3L5.3 15.1L6.8 15.1L4.8 11.2Z" fill="#6a3412"/><path d="M3.2 5.6l1.6 .4M5.8 6.3l1.4 .5" stroke="#5a4030" stroke-width=".8"/></g><rect x="5.8" y="68.8" width="1.8" height="1.8" fill="#fff"/><rect x="5" y="68" width="1.8" height="1.8" fill="#bcbcbc"/><rect x="5.8" y="72.8" width="1.8" height="1.8" fill="#fff"/><rect x="5" y="72" width="1.8" height="1.8" fill="#bcbcbc"/><rect x="5.8" y="76.8" width="1.8" height="1.8" fill="#fff"/><rect x="5" y="76" width="1.8" height="1.8" fill="#bcbcbc"/><rect x="5.8" y="80.8" width="1.8" height="1.8" fill="#fff"/><rect x="5" y="80" width="1.8" height="1.8" fill="#bcbcbc"/><rect x="5.8" y="84.8" width="1.8" height="1.8" fill="#fff"/><rect x="5" y="84" width="1.8" height="1.8" fill="#bcbcbc"/><rect x="63.8" y="68.8" width="1.8" height="1.8" fill="#fff"/><rect x="63" y="68" width="1.8" height="1.8" fill="#bcbcbc"/><rect x="63.8" y="72.8" width="1.8" height="1.8" fill="#fff"/><rect x="63" y="72" width="1.8" height="1.8" fill="#bcbcbc"/><rect x="63.8" y="76.8" width="1.8" height="1.8" fill="#fff"/><rect x="63" y="76" width="1.8" height="1.8" fill="#bcbcbc"/><rect x="63.8" y="80.8" width="1.8" height="1.8" fill="#fff"/><rect x="63" y="80" width="1.8" height="1.8" fill="#bcbcbc"/><rect x="63.8" y="84.8" width="1.8" height="1.8" fill="#fff"/><rect x="63" y="84" width="1.8" height="1.8" fill="#bcbcbc"/><rect x="146.8" y="68.8" width="1.8" height="1.8" fill="#fff"/><rect x="146" y="68" width="1.8" height="1.8" fill="#bcbcbc"/><rect x="146.8" y="72.8" width="1.8" height="1.8" fill="#fff"/><rect x="146" y="72" width="1.8" height="1.8" fill="#bcbcbc"/><rect x="146.8" y="76.8" width="1.8" height="1.8" fill="#fff"/><rect x="146" y="76" width="1.8" height="1.8" fill="#bcbcbc"/><rect x="146.8" y="80.8" width="1.8" height="1.8" fill="#fff"/><rect x="146" y="80" width="1.8" height="1.8" fill="#bcbcbc"/><rect x="146.8" y="84.8" width="1.8" height="1.8" fill="#fff"/><rect x="146" y="84" width="1.8" height="1.8" fill="#bcbcbc"/><rect x="326.8" y="68.8" width="1.8" height="1.8" fill="#fff"/><rect x="326" y="68" width="1.8" height="1.8" fill="#bcbcbc"/><rect x="326.8" y="72.8" width="1.8" height="1.8" fill="#fff"/><rect x="326" y="72" width="1.8" height="1.8" fill="#bcbcbc"/><rect x="326.8" y="76.8" width="1.8" height="1.8" fill="#fff"/><rect x="326" y="76" width="1.8" height="1.8" fill="#bcbcbc"/><rect x="326.8" y="80.8" width="1.8" height="1.8" fill="#fff"/><rect x="326" y="80" width="1.8" height="1.8" fill="#bcbcbc"/><rect x="326.8" y="84.8" width="1.8" height="1.8" fill="#fff"/><rect x="326" y="84" width="1.8" height="1.8" fill="#bcbcbc"/><rect x="384.8" y="68.8" width="1.8" height="1.8" fill="#fff"/><rect x="384" y="68" width="1.8" height="1.8" fill="#bcbcbc"/><rect x="384.8" y="72.8" width="1.8" height="1.8" fill="#fff"/><rect x="384" y="72" width="1.8" height="1.8" fill="#bcbcbc"/><rect x="384.8" y="76.8" width="1.8" height="1.8" fill="#fff"/><rect x="384" y="76" width="1.8" height="1.8" fill="#bcbcbc"/><rect x="384.8" y="80.8" width="1.8" height="1.8" fill="#fff"/><rect x="384" y="80" width="1.8" height="1.8" fill="#bcbcbc"/><rect x="384.8" y="84.8" width="1.8" height="1.8" fill="#fff"/><rect x="384" y="84" width="1.8" height="1.8" fill="#bcbcbc"/><rect x="569.8" y="68.8" width="1.8" height="1.8" fill="#fff"/><rect x="569" y="68" width="1.8" height="1.8" fill="#bcbcbc"/><rect x="569.8" y="72.8" width="1.8" height="1.8" fill="#fff"/><rect x="569" y="72" width="1.8" height="1.8" fill="#bcbcbc"/><rect x="569.8" y="76.8" width="1.8" height="1.8" fill="#fff"/><rect x="569" y="76" width="1.8" height="1.8" fill="#bcbcbc"/><rect x="569.8" y="80.8" width="1.8" height="1.8" fill="#fff"/><rect x="569" y="80" width="1.8" height="1.8" fill="#bcbcbc"/><rect x="569.8" y="84.8" width="1.8" height="1.8" fill="#fff"/><rect x="569" y="84" width="1.8" height="1.8" fill="#bcbcbc"/><rect x="879.8" y="68.8" width="1.8" height="1.8" fill="#fff"/><rect x="879" y="68" width="1.8" height="1.8" fill="#bcbcbc"/><rect x="879.8" y="72.8" width="1.8" height="1.8" fill="#fff"/><rect x="879" y="72" width="1.8" height="1.8" fill="#bcbcbc"/><rect x="879.8" y="76.8" width="1.8" height="1.8" fill="#fff"/><rect x="879" y="76" width="1.8" height="1.8" fill="#bcbcbc"/><rect x="879.8" y="80.8" width="1.8" height="1.8" fill="#fff"/><rect x="879" y="80" width="1.8" height="1.8" fill="#bcbcbc"/><rect x="879.8" y="84.8" width="1.8" height="1.8" fill="#fff"/><rect x="879" y="84" width="1.8" height="1.8" fill="#bcbcbc"/><rect x="57" y="65" width="1" height="24" fill="#d2d2d2"/><rect x="58" y="65" width="1" height="24" fill="#fdfdfd"/><rect x="139" y="65" width="1" height="24" fill="#d2d2d2"/><rect x="140" y="65" width="1" height="24" fill="#fdfdfd"/><rect x="320" y="65" width="1" height="24" fill="#d2d2d2"/><rect x="321" y="65" width="1" height="24" fill="#fdfdfd"/><rect x="378" y="65" width="1" height="24" fill="#d2d2d2"/><rect x="379" y="65" width="1" height="24" fill="#fdfdfd"/><rect x="562" y="65" width="1" height="24" fill="#d2d2d2"/><rect x="563" y="65" width="1" height="24" fill="#fdfdfd"/><rect x="873" y="65" width="1" height="24" fill="#d2d2d2"/><rect x="874" y="65" width="1" height="24" fill="#fdfdfd"/><rect x="222" y="69" width="1" height="16" fill="#dcdcdc"/><rect x="251" y="69" width="1" height="16" fill="#dcdcdc"/><rect x="280" y="69" width="1" height="16" fill="#dcdcdc"/><rect x="822" y="69" width="1" height="16" fill="#dcdcdc"/><path d="M14.5 82.3V72.2Q14.5 71.2 15.5 71.2H19.6L21.2 73H26.2Q27.2 73 27.2 74V76H17.6L14.8 82.6Z" fill="#e9b52b" stroke="#b58c1c" stroke-width=".9" stroke-linejoin="round"/><path d="M14.8 82.7L17.8 75.6H29.2L26.2 82.7Z" fill="#ffd968" stroke="#b58c1c" stroke-width=".9" stroke-linejoin="round"/><path d="M38 69.8H52V84.1H40.6L38 81.5Z" fill="#1ccef6" stroke="#15a8d4" stroke-width="1" stroke-linejoin="round"/><rect x="41.4" y="70" width="8.2" height="7" fill="#f3f3f3" stroke="#bdbdbd" stroke-width=".8"/><rect x="45" y="80" width="5" height="4.4" fill="#b6b6b6" stroke="#8e8e8e" stroke-width=".6"/><path d="M74.4 77L80.6 70.4V74.5H86.2V79.5H80.6V83.6Z" fill="#12c8f8" stroke="#0e9fd2" stroke-width=".9" stroke-linejoin="round"/><path d="M94 74.8h7.4l-3.7 4.2z" fill="#1a1a1a"/><path d="M121.6 77L115.4 70.4V74.5H108.8V79.5H115.4V83.6Z" fill="#b6b6b6" stroke="#a6a6a6" stroke-width=".9" stroke-linejoin="round"/><path d="M129 74.8h7.4l-3.7 4.2z" fill="#808080"/><circle cx="161.7" cy="76.6" r="7.2" fill="#04ccc4" stroke="#1f8484" stroke-width=".9"/><rect x="160.50" y="75.6" width="8.9" height="9.1" fill="#3a6e6e"/><rect x="159.30" y="74.3" width="8.8" height="9" fill="#fff"/><circle cx="184.8" cy="76.6" r="7.2" fill="#04ccc4" stroke="#1f8484" stroke-width=".9"/><rect x="183.60" y="75.6" width="8.9" height="9.1" fill="#3a6e6e"/><rect x="182.40" y="74.3" width="8.8" height="9" fill="#fff"/><circle cx="207.9" cy="76.6" r="7.2" fill="#04ccc4" stroke="#1f8484" stroke-width=".9"/><rect x="206.70" y="75.6" width="8.9" height="9.1" fill="#3a6e6e"/><rect x="205.30" y="74.3" width="9.4" height="9.4" fill="#04ccc4"/><rect x="205.50" y="74.3" width="8.8" height="8" fill="#fff"/><circle cx="237" cy="76.6" r="7.2" fill="#b6b6b6" stroke="#a2a2a2" stroke-width=".9"/><rect x="235.80" y="75.6" width="8.9" height="9.1" fill="#a0a0a0"/><rect x="234.60" y="74.3" width="8.8" height="9" fill="#fff"/><path d="M161.8 75.3v7M165.8 75.3v7" stroke="#111" stroke-width=".9" fill="none"/><path d="M160.2 77.4h6.8M160.2 80.2h6.8" stroke="#111" stroke-width="1.1" fill="none"/><text x="186.8" y="82.6" text-anchor="middle" font-family="Liberation Serif,serif" font-size="10.5" fill="#111">T</text><text x="209.9" y="80.4" text-anchor="middle" font-family="Liberation Sans,sans-serif" font-size="5" fill="#777" letter-spacing="-.3">vow</text><path d="M235.6 78.2h3.2v-1.8l3.2 2.8l-3.2 2.8v-1.8h-3.2z" fill="#b0b0b0" stroke="#999" stroke-width=".5"/><path d="M260.6 70H264Q268 70 268 74V79H271.2L266.5 84.4L261.8 79H265V74.6Q265 72.9 263.4 72.9H260.6Z" fill="#36b6b6" stroke="#1f8686" stroke-width=".8" stroke-linejoin="round"/><rect x="287.5" y="69.5" width="15" height="15" fill="#ffff3a" stroke="#10108c"/><text x="295" y="82.2" text-anchor="middle" font-family="Liberation Sans,sans-serif" font-weight="bold" font-size="13.5" fill="#10108c">A</text><path d="M309 74.8h7.4l-3.7 4.2z" fill="#1a1a1a"/><rect x="334.8" y="69.7" width="15" height="14.8" rx="1.2" fill="#fff"/><rect x="335.0" y="69.9" width="14.6" height="2.6" fill="#10d4fa"/><rect x="334.8" y="69.7" width="15" height="14.8" rx="1.2" fill="none" stroke="#70787e"/><path d="M335.90000000000003 69.7H348.7" stroke="#10d4fa" stroke-opacity=".8" fill="none"/><path d="M342.3 74.8L347.4 83H337.2Z" fill="#f83252"/><circle cx="365" cy="77" r="7.3" fill="#02cc62" stroke="#14a856" stroke-width=".9"/><circle cx="367.7" cy="73.7" r="2.1" fill="#b2f6d6" opacity=".9"/><path d="M397.6 70.6H402.4Q404.2 70.6 404.2 72.4V74.9H401.2V73.4H399.4V80.6H401.2V79.1H404.2V81.6Q404.2 83.4 402.4 83.4H397.6Q395.8 83.4 395.8 81.6V72.4Q395.8 70.6 397.6 70.6Z" fill="#62aaf2" stroke="#101010" stroke-width="1" stroke-linejoin="round"/><path d="M404.37 79.50h1.87v1.87h1.87v1.87h-1.87v1.87h-1.87v-1.87h-1.87v-1.87h1.87z" fill="#52d890" stroke="#2f9e68" stroke-width=".7" stroke-linejoin="round"/><path d="M417.4 70.6H424Q427.7 70.6 427.7 74.6V79.4Q427.7 83.4 424 83.4H417.4V81.6H418.9V72.4H417.4Z" fill="#a6a6a6" stroke="#101010" stroke-width="1" stroke-linejoin="round"/><rect x="421.3" y="73" width="3.2" height="8" fill="#8a8a8a" stroke="#d8d8d8" stroke-width=".6"/><path d="M427.37 79.50h1.87v1.87h1.87v1.87h-1.87v1.87h-1.87v-1.87h-1.87v-1.87h1.87z" fill="#52d890" stroke="#2f9e68" stroke-width=".7" stroke-linejoin="round"/><rect x="442.8" y="71.8" width="7" height="10.4" fill="#fff"/><path d="M444.4 70.9H442.8Q441.3 70.9 441.3 72.6V75Q441.3 76.7 439.8 77Q441.3 77.3 441.3 79V81.4Q441.3 83.1 442.8 83.1H444.4" stroke="#151515" stroke-width="3" fill="none"/><path d="M444.4 70.9H442.8Q441.3 70.9 441.3 72.6V75Q441.3 76.7 439.8 77Q441.3 77.3 441.3 79V81.4Q441.3 83.1 442.8 83.1H444.4" stroke="#f8e808" stroke-width="1.5" fill="none"/><path d="M448.2 70.9H449.8Q451.3 70.9 451.3 72.6V75Q451.3 76.7 452.8 77Q451.3 77.3 451.3 79V81.4Q451.3 83.1 449.8 83.1H448.2" stroke="#151515" stroke-width="3" fill="none"/><path d="M448.2 70.9H449.8Q451.3 70.9 451.3 72.6V75Q451.3 76.7 452.8 77Q451.3 77.3 451.3 79V81.4Q451.3 83.1 449.8 83.1H448.2" stroke="#f8e808" stroke-width="1.5" fill="none"/><path d="M450.37 79.80h1.87v1.87h1.87v1.87h-1.87v1.87h-1.87v-1.87h-1.87v-1.87h1.87z" fill="#52d890" stroke="#2f9e68" stroke-width=".7" stroke-linejoin="round"/><path d="M462.5 70.7H467V75.8H465V78.3H462.5Z" fill="#86f0c6" stroke="#151515" stroke-width=".9"/><path d="M468 70.7H472.5V75.8H470.5V78.3H468Z" fill="#86f0c6" stroke="#151515" stroke-width=".9"/><path d="M473.00 79.20h2.00v2.00h2.00v2.00h-2.00v2.00h-2.00v-2.00h-2.00v-2.00h2.00z" fill="#52d890" stroke="#2f9e68" stroke-width=".7" stroke-linejoin="round"/><path d="M482.8 74.8h7.4l-3.7 4.2z" fill="#1a1a1a"/><rect x="499.5" y="72.2" width="9" height="9.6" fill="#fff"/><path d="M496.5 70.7H501.8V72.7H500.2V81.3H501.8V83.3H496.5Z" fill="#f02646" stroke="#6e1424" stroke-width=".9"/><path d="M511.3 70.7H506V72.7H507.6V81.3H506V83.3H511.3Z" fill="#f02646" stroke="#6e1424" stroke-width=".9"/><path d="M508.37 79.50h1.87v1.87h1.87v1.87h-1.87v1.87h-1.87v-1.87h-1.87v-1.87h1.87z" fill="#52d890" stroke="#2f9e68" stroke-width=".7" stroke-linejoin="round"/><rect x="519.4" y="76.0" width="14.6" height="6.2" fill="#151515"/><rect x="526.0" y="78.10000000000001" width="5.8" height="2" fill="#fff"/><path d="M522.6 80.0L530.1999999999999 72.4" stroke="#9a7a2a" stroke-width="3.5" stroke-linecap="round"/><path d="M522.6 80.0L529.9 72.7" stroke="#f4c858" stroke-width="2.4" stroke-linecap="round"/><circle cx="530.5" cy="72.30000000000001" r="1.4" fill="#f2cdb6"/><path d="M534.4 80.4v4.6h-4.8z" fill="#18c2f2"/><path d="M550 69.5L557.5 77L550 84.5L542.5 77Z" fill="#f82a52"/><rect x="546.5" y="75.9" width="7" height="2.2" fill="#fff"/><path d="M578.3 69.3L592.2 77L578.3 84.7Z" fill="#a9a9a9"/><rect x="600" y="69" width="16" height="16" rx="2.8" fill="#a9a9a9"/><rect x="604.5" y="73.1" width="2.4" height="7.6" fill="#e8e8e8"/><rect x="609.2" y="73.1" width="2.4" height="7.6" fill="#e8e8e8"/><rect x="623" y="69" width="16" height="16" rx="2.8" fill="#a9a9a9"/><rect x="627.5" y="73.5" width="7" height="7" fill="#e8e8e8"/><path d="M806.8 75.9L811.4 80.5L816 75.9" stroke="#222" stroke-width="1.2" fill="none"/><rect x="832.5" y="70.9" width="12" height="13.2" rx="1" fill="#fbfbfb" stroke="#a9a9a9"/><path d="M829.3 69.4L835.2 72.4L829.3 75.6Z" fill="#ababab"/><text x="838.8" y="81.6" text-anchor="middle" font-family="Liberation Sans,sans-serif" font-weight="bold" font-size="10" fill="#6e6e6e">C</text><rect x="851.2" y="68" width="18.8" height="18" rx="3.6" fill="#d6aa80"/><rect x="853.8" y="71.8" width="12.2" height="13" rx="1" fill="#fff" stroke="#333"/><text x="859.4" y="82.6" text-anchor="middle" font-family="Liberation Sans,sans-serif" font-weight="bold" font-size="11" fill="#111">C</text><path d="M862.6 70.3L868.8 73.7L862.6 77.1Z" fill="#52d890" stroke="#2f9e68" stroke-width=".5"/><rect x="887.5" y="69.9" width="15" height="14.2" rx="1.2" fill="#fff"/><rect x="887.7" y="70.10000000000001" width="14.6" height="2.6" fill="#10d4fa"/><rect x="887.5" y="69.9" width="15" height="14.2" rx="1.2" fill="none" stroke="#70787e"/><path d="M888.6 69.9H901.4" stroke="#10d4fa" stroke-opacity=".8" fill="none"/><circle cx="890.9" cy="78.5" r="2" fill="#f82a52"/><rect x="895" y="74.4" width="6.6" height="1.6" fill="#111"/><rect x="895" y="77.7" width="6.6" height="1.6" fill="#111"/><rect x="895" y="81.0" width="6.6" height="1.6" fill="#111"/><circle cx="913" cy="77" r="2.5" fill="#f82a52"/><rect x="916.5" y="71.85000000000001" width="7.6" height="1.7" fill="#111"/><rect x="916.5" y="75.85000000000001" width="7.6" height="1.7" fill="#111"/><rect x="916.5" y="79.85000000000001" width="7.6" height="1.7" fill="#111"/><path d="M922.40 79.50h1.80v1.80h1.80v1.80h-1.80v1.80h-1.80v-1.80h-1.80v-1.80h1.80z" fill="#52d890" stroke="#2f9e68" stroke-width=".7" stroke-linejoin="round"/><circle cx="936" cy="77" r="2.4" fill="#b4b4b4"/><rect x="940" y="71.85000000000001" width="7.6" height="1.8" fill="#6c6c6c"/><rect x="940" y="75.85000000000001" width="7.6" height="1.8" fill="#6c6c6c"/><rect x="940" y="79.85000000000001" width="7.6" height="1.8" fill="#6c6c6c"/><circle cx="946.6" cy="82.3" r="2" fill="#9c9c9c" stroke="#9c9c9c" stroke-width="1.3" stroke-dasharray="1.1 .9"/><rect x="5.8" y="95.8" width="1.8" height="1.8" fill="#fff"/><rect x="5" y="95" width="1.8" height="1.8" fill="#bcbcbc"/><rect x="5.8" y="99.8" width="1.8" height="1.8" fill="#fff"/><rect x="5" y="99" width="1.8" height="1.8" fill="#bcbcbc"/><rect x="5.8" y="103.8" width="1.8" height="1.8" fill="#fff"/><rect x="5" y="103" width="1.8" height="1.8" fill="#bcbcbc"/><rect x="5.8" y="107.8" width="1.8" height="1.8" fill="#fff"/><rect x="5" y="107" width="1.8" height="1.8" fill="#bcbcbc"/><rect x="5.8" y="111.8" width="1.8" height="1.8" fill="#fff"/><rect x="5" y="111" width="1.8" height="1.8" fill="#bcbcbc"/><rect x="5.8" y="115.8" width="1.8" height="1.8" fill="#fff"/><rect x="5" y="115" width="1.8" height="1.8" fill="#bcbcbc"/><rect x="5.8" y="119.8" width="1.8" height="1.8" fill="#fff"/><rect x="5" y="119" width="1.8" height="1.8" fill="#bcbcbc"/><rect x="5.8" y="123.8" width="1.8" height="1.8" fill="#fff"/><rect x="5" y="123" width="1.8" height="1.8" fill="#bcbcbc"/><rect x="5.8" y="127.8" width="1.8" height="1.8" fill="#fff"/><rect x="5" y="127" width="1.8" height="1.8" fill="#bcbcbc"/><rect x="5.8" y="131.8" width="1.8" height="1.8" fill="#fff"/><rect x="5" y="131" width="1.8" height="1.8" fill="#bcbcbc"/><rect x="5.8" y="135.8" width="1.8" height="1.8" fill="#fff"/><rect x="5" y="135" width="1.8" height="1.8" fill="#bcbcbc"/><path d="M20.6 95.6V103.2L14.4 99.4Z" fill="#3c3c3c"/><path d="M15 105.8V113.4L21.2 109.6Z" fill="#3c3c3c"/><path d="M1386.6 95.2h2.8v3.4h1.6l-3 3.9l-3-3.9h1.6z" fill="#ffff48"/><rect x="5.5" y="148.5" width="15" height="15" rx="1.2" fill="#f0f0f0"/><rect x="5.7" y="148.7" width="14.6" height="2.6" fill="#10d4fa"/><rect x="5.5" y="148.5" width="15" height="15" rx="1.2" fill="none" stroke="#70787e"/><path d="M6.6 148.5H19.4" stroke="#10d4fa" stroke-opacity=".8" fill="none"/><path d="M6.5 151.6V162.5H19.5V151.6" stroke="#fff" stroke-opacity=".8" fill="none"/><text x="13.1" y="159.80" text-anchor="middle" font-family="DejaVu Serif,serif" font-style="italic" font-weight="bold" font-size="9.6" fill="#1a1a1a">ƒ</text><rect x="5.5" y="738.5" width="15" height="15" rx="1.2" fill="#fff"/><rect x="5.7" y="738.7" width="14.6" height="2.6" fill="#10d4fa"/><rect x="5.5" y="738.5" width="15" height="15" rx="1.2" fill="none" stroke="#80858a"/><path d="M6.6 738.5H19.4" stroke="#10d4fa" stroke-opacity=".8" fill="none"/><rect x="7.2" y="741.9" width="11.6" height="10.9" rx="1.3" fill="#c2c2c2"/><rect x="8.5" y="742.9" width="9" height="9" rx=".8" fill="#fff"/><rect x="12.1" y="743.85" width="4.5" height="1.1" fill="#222"/><rect x="9.6" y="743.80" width="1.6" height="1.2" fill="#1a7ac4"/><rect x="12.1" y="745.88" width="4.5" height="1.1" fill="#222"/><rect x="9.6" y="745.83" width="1.6" height="1.2" fill="#1a7ac4"/><rect x="12.1" y="747.91" width="4.5" height="1.1" fill="#222"/><rect x="9.6" y="747.86" width="1.6" height="1.2" fill="#1a7ac4"/><rect x="12.1" y="749.94" width="4.5" height="1.1" fill="#222"/><rect x="9.6" y="749.89" width="1.6" height="1.2" fill="#1a7ac4"/><rect x="323.5" y="145.5" width="15" height="15" rx="1.2" fill="#fff"/><rect x="323.7" y="145.7" width="14.6" height="2.6" fill="#10d4fa"/><rect x="323.5" y="145.5" width="15" height="15" rx="1.2" fill="none" stroke="#80858a"/><path d="M324.6 145.5H337.4" stroke="#10d4fa" stroke-opacity=".8" fill="none"/><rect x="325.2" y="148.9" width="11.6" height="10.9" rx="1.3" fill="#c2c2c2"/><rect x="326.5" y="149.9" width="9" height="9" rx=".8" fill="#fff"/><rect x="330.1" y="150.85" width="4.5" height="1.1" fill="#222"/><rect x="327.6" y="150.80" width="1.6" height="1.2" fill="#1a7ac4"/><rect x="330.1" y="152.88" width="4.5" height="1.1" fill="#222"/><rect x="327.6" y="152.83" width="1.6" height="1.2" fill="#1a7ac4"/><rect x="330.1" y="154.91" width="4.5" height="1.1" fill="#222"/><rect x="327.6" y="154.86" width="1.6" height="1.2" fill="#1a7ac4"/><rect x="330.1" y="156.94" width="4.5" height="1.1" fill="#222"/><rect x="327.6" y="156.89" width="1.6" height="1.2" fill="#1a7ac4"/><rect x="498.5" y="146.5" width="15" height="15" rx="1.2" fill="#fff"/><rect x="498.7" y="146.7" width="14.6" height="2.6" fill="#10d4fa"/><rect x="498.5" y="146.5" width="15" height="15" rx="1.2" fill="none" stroke="#80858a"/><path d="M499.6 146.5H512.4" stroke="#10d4fa" stroke-opacity=".8" fill="none"/><rect x="500.2" y="149.9" width="11.6" height="10.9" rx="1.3" fill="#c2c2c2"/><rect x="501.5" y="150.9" width="9" height="9" rx=".8" fill="#fff"/><rect x="505.1" y="151.85" width="4.5" height="1.1" fill="#222"/><rect x="502.6" y="151.80" width="1.6" height="1.2" fill="#1a7ac4"/><rect x="505.1" y="153.88" width="4.5" height="1.1" fill="#222"/><rect x="502.6" y="153.83" width="1.6" height="1.2" fill="#1a7ac4"/><rect x="505.1" y="155.91" width="4.5" height="1.1" fill="#222"/><rect x="502.6" y="155.86" width="1.6" height="1.2" fill="#1a7ac4"/><rect x="505.1" y="157.94" width="4.5" height="1.1" fill="#222"/><rect x="502.6" y="157.89" width="1.6" height="1.2" fill="#1a7ac4"/><rect x="674.5" y="146.5" width="15" height="15" rx="1.2" fill="#fff"/><rect x="674.7" y="146.7" width="14.6" height="2.6" fill="#10d4fa"/><rect x="674.5" y="146.5" width="15" height="15" rx="1.2" fill="none" stroke="#80858a"/><path d="M675.6 146.5H688.4" stroke="#10d4fa" stroke-opacity=".8" fill="none"/><rect x="676.2" y="149.9" width="11.6" height="10.9" rx="1.3" fill="#c2c2c2"/><rect x="677.5" y="150.9" width="9" height="9" rx=".8" fill="#fff"/><rect x="681.1" y="151.85" width="4.5" height="1.1" fill="#222"/><rect x="678.6" y="151.80" width="1.6" height="1.2" fill="#1a7ac4"/><rect x="681.1" y="153.88" width="4.5" height="1.1" fill="#222"/><rect x="678.6" y="153.83" width="1.6" height="1.2" fill="#1a7ac4"/><rect x="681.1" y="155.91" width="4.5" height="1.1" fill="#222"/><rect x="678.6" y="155.86" width="1.6" height="1.2" fill="#1a7ac4"/><rect x="681.1" y="157.94" width="4.5" height="1.1" fill="#222"/><rect x="678.6" y="157.89" width="1.6" height="1.2" fill="#1a7ac4"/><rect x="849.5" y="146.5" width="15" height="15" rx="1.2" fill="#fff"/><rect x="849.7" y="146.7" width="14.6" height="2.6" fill="#10d4fa"/><rect x="849.5" y="146.5" width="15" height="15" rx="1.2" fill="none" stroke="#70787e"/><path d="M850.6 146.5H863.4" stroke="#10d4fa" stroke-opacity=".8" fill="none"/><circle cx="857" cy="155.4" r="4.3" fill="#fff" stroke="#222" stroke-width="1.2"/><path d="M857 154l2.4 2.6h-1.3v2h-2.2v-2h-1.3z" fill="#20c464"/><rect x="1024.8" y="146.5" width="15" height="15" rx="1.2" fill="#fff"/><rect x="1025.0" y="146.7" width="14.6" height="2.6" fill="#10d4fa"/><rect x="1024.8" y="146.5" width="15" height="15" rx="1.2" fill="none" stroke="#70787e"/><path d="M1025.8999999999999 146.5H1038.7" stroke="#10d4fa" stroke-opacity=".8" fill="none"/><circle cx="1032.3" cy="155.3" r="4.9" fill="#141414"/><text x="1032.3" y="158.4" text-anchor="middle" font-family="Liberation Serif,serif" font-weight="bold" font-size="9" fill="#fff">t</text><rect x="1199.5" y="146.5" width="15" height="15" rx="1.2" fill="#fff"/><rect x="1199.7" y="146.7" width="14.6" height="2.6" fill="#10d4fa"/><rect x="1199.5" y="146.5" width="15" height="15" rx="1.2" fill="none" stroke="#70787e"/><path d="M1200.6 146.5H1213.4" stroke="#10d4fa" stroke-opacity=".8" fill="none"/><path d="M1201.2 150.2l5 3.2l-5 3.2z" fill="#52d890" stroke="#2f9e68" stroke-width=".5"/><rect x="1206.3" y="149.5" width=".8" height="12" fill="#888"/><rect x="1208" y="151.4" width="5" height=".8" fill="#666"/><rect x="1208" y="153.4" width="5" height=".8" fill="#666"/><rect x="1208" y="155.4" width="5" height=".8" fill="#666"/><rect x="1208" y="157.4" width="5" height=".8" fill="#666"/><rect x="1208" y="159.4" width="5" height=".8" fill="#666"/><rect x="1201" y="157.4" width="4.5" height=".8" fill="#888"/><rect x="1201" y="159.4" width="4.5" height=".8" fill="#888"/><rect x="1375.5" y="146.5" width="15" height="15" rx="1.2" fill="#fff"/><rect x="1375.7" y="146.7" width="14.6" height="2.6" fill="#10d4fa"/><rect x="1375.5" y="146.5" width="15" height="15" rx="1.2" fill="none" stroke="#70787e"/><path d="M1376.6 146.5H1389.4" stroke="#10d4fa" stroke-opacity=".8" fill="none"/><path d="M1384.3 149.6l5.4 3.2l-5.4 3.2z" fill="#52d890" stroke="#2f9e68" stroke-width=".5"/><rect x="1377.2" y="151.4" width="6" height=".8" fill="#555"/><rect x="1377.2" y="153.4" width="6" height=".8" fill="#555"/><rect x="1377.2" y="155.4" width="6" height=".8" fill="#555"/><rect x="1377.2" y="157.4" width="11" height=".8" fill="#555"/><rect x="1377.2" y="159.4" width="11" height=".8" fill="#555"/><rect x="1383.6" y="156" width=".8" height="5.4" fill="#888"/><rect x="458.5" y="147.7" width="13" height="12.6" rx="1.2" fill="#e98b5c" stroke="#e23a3a"/><path d="M462 151.0l6 6m0-6l-6 6" stroke="#fff" stroke-width="1.5" fill="none"/><rect x="634.5" y="148.5" width="13" height="12.6" rx="1.2" fill="#c6c6c6" stroke="#a9a9a9"/><path d="M638 151.8l6 6m0-6l-6 6" stroke="#fff" stroke-width="1.5" fill="none"/><rect x="809.5" y="148.5" width="13" height="12.6" rx="1.2" fill="#c6c6c6" stroke="#a9a9a9"/><path d="M813 151.8l6 6m0-6l-6 6" stroke="#fff" stroke-width="1.5" fill="none"/><rect x="984.8" y="148.5" width="13" height="12.6" rx="1.2" fill="#c6c6c6" stroke="#a9a9a9"/><path d="M988.3 151.8l6 6m0-6l-6 6" stroke="#fff" stroke-width="1.5" fill="none"/><rect x="1159.9" y="148.5" width="13" height="12.6" rx="1.2" fill="#c6c6c6" stroke="#a9a9a9"/><path d="M1163.4 151.8l6 6m0-6l-6 6" stroke="#fff" stroke-width="1.5" fill="none"/><rect x="1335.9" y="148.5" width="13" height="12.6" rx="1.2" fill="#c6c6c6" stroke="#a9a9a9"/><path d="M1339.4 151.8l6 6m0-6l-6 6" stroke="#fff" stroke-width="1.5" fill="none"/><circle cx="617.5" cy="417.3" r="7.3" fill="#1c1c1c"/><path d="M616.05 414.45L614.59 411.60A6.4 6.4 0 0 1 620.41 411.60L618.95 414.45Z" fill="#04d264"/><path d="M619.24 414.62L620.99 411.93A6.4 6.4 0 0 1 623.89 416.97L620.70 417.13Z" fill="#1272b2"/><path d="M620.70 417.47L623.89 417.63A6.4 6.4 0 0 1 620.99 422.67L619.24 419.98Z" fill="#f85412"/><path d="M618.95 420.15L620.41 423.00A6.4 6.4 0 0 1 614.59 423.00L616.05 420.15Z" fill="#f83262"/><path d="M615.76 419.98L614.01 422.67A6.4 6.4 0 0 1 611.11 417.63L614.30 417.47Z" fill="#ffa2aa"/><path d="M614.30 417.13L611.11 416.97A6.4 6.4 0 0 1 614.01 411.93L615.76 414.62Z" fill="#42e242"/><rect x="630.8" y="416.6" width="14.6" height="6.2" fill="#151515"/><rect x="637.4" y="418.7" width="5.8" height="2" fill="#fff"/><path d="M634.0 420.6L641.5999999999999 413" stroke="#9a7a2a" stroke-width="3.5" stroke-linecap="round"/><path d="M634.0 420.6L641.3 413.3" stroke="#f4c858" stroke-width="2.4" stroke-linecap="round"/><circle cx="641.9" cy="412.9" r="1.4" fill="#f2cdb6"/><path d="M645.8 421v4.6h-4.8z" fill="#18c2f2"/><rect x="650.9" y="410.9" width="13.4" height="13.4" rx="1.2" fill="#fff"/><rect x="651.1" y="411.09999999999997" width="13.0" height="2.6" fill="#10d4fa"/><rect x="650.9" y="410.9" width="13.4" height="13.4" rx="1.2" fill="none" stroke="#70787e"/><path d="M652.0 410.9H663.1999999999999" stroke="#10d4fa" stroke-opacity=".8" fill="none"/><path d="M652.6 421.6C657 421.6 656 416.2 660.4 416.2" stroke="#151515" stroke-width="1.5" fill="none"/><path d="M660 414l2.6 2.2l-2.6 2.2z" fill="#151515"/><path d="M652.8 416C656.5 416 657 421.8 660.6 421.8" stroke="#9a9a9a" stroke-width=".8" fill="none"/><path d="M660.4 420.4l1.8 1.4l-1.8 1.4z" fill="#9a9a9a"/></svg>
</body></html>
